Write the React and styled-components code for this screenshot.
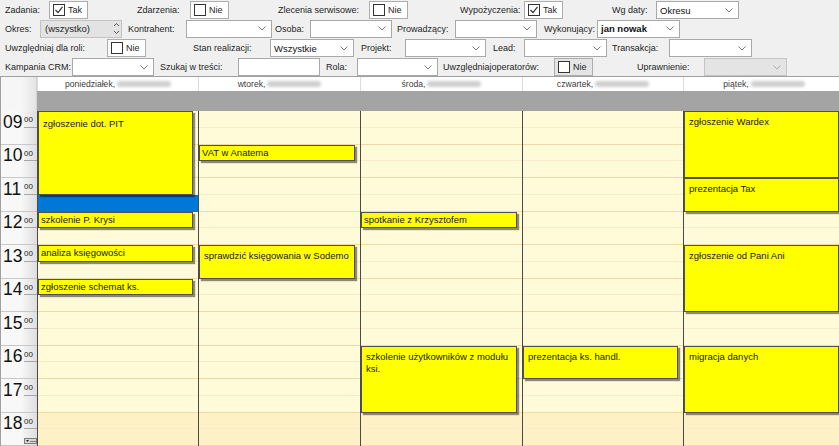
import React from "react";
import styled, { createGlobalStyle } from "styled-components";

const GlobalStyle = createGlobalStyle`
  html, body { margin: 0; padding: 0; background: #f0f0f0; overflow: hidden; }
  body { font-family: "Liberation Sans", Arial, sans-serif; color: #000; }
  * { box-sizing: border-box; }
`;

const HOUR = 33.5;
const SLOT = HOUR / 2;

//Filter definitions: label x, control x, control width
const filterRows = [
  [
    { label: "Zadania:", lx: 5, cx: 49, w: 39, type: "check", value: "Tak", checked: true },
    { label: "Zdarzenia:", lx: 137, cx: 190, w: 39, type: "check", value: "Nie" },
    { label: "Zlecenia serwisowe:", lx: 278, cx: 369, w: 39, type: "check", value: "Nie" },
    { label: "Wypożyczenia:", lx: 460, cx: 524, w: 39, type: "check", value: "Tak", checked: true },
    { label: "Wg daty:", lx: 612, cx: 656, w: 83, type: "combo", value: "Okresu" },
  ],
  [
    { label: "Okres:", lx: 5, cx: 40, w: 82, type: "spin", value: "(wszystko)" },
    { label: "Kontrahent:", lx: 128, cx: 186, w: 86, type: "combo" },
    { label: "Osoba:", lx: 275, cx: 310, w: 82, type: "combo" },
    { label: "Prowadzący:", lx: 397, cx: 455, w: 82, type: "combo" },
    { label: "Wykonujący:", lx: 544, cx: 597, w: 83, type: "combo", value: "jan nowak", bold: true },
  ],
  [
    { label: "Uwzględniaj dla roli:", lx: 5, cx: 107, w: 39, type: "check", value: "Nie" },
    { label: "Stan realizacji:", lx: 193, cx: 270, w: 84, type: "combo", value: "Wszystkie" },
    { label: "Projekt:", lx: 361, cx: 405, w: 81, type: "combo" },
    { label: "Lead:", lx: 493, cx: 524, w: 83, type: "combo" },
    { label: "Transakcja:", lx: 612, cx: 669, w: 83, type: "combo" },
  ],
  [
    { label: "Kampania CRM:", lx: 5, cx: 72, w: 82, type: "combo" },
    { label: "Szukaj w treści:", lx: 160, cx: 238, w: 82, type: "text" },
    { label: "Rola:", lx: 326, cx: 357, w: 81, type: "combo" },
    { label: "Uwzględniajoperatorów:", lx: 443, cx: 554, w: 39, type: "check", value: "Nie", grey: true },
    { label: "Uprawnienie:", lx: 637, cx: 704, w: 83, type: "combo", disabled: true },
  ],
];

const rowHeights = [19, 20, 19, 18];

const days = [
  {
    name: "poniedziałek,",
    selected: 5,
    events: [
      { text: "zgłoszenie dot. PIT", from: 9, to: 11.5, pt: 6 },
      { text: "szkolenie P. Krysi", from: 12, to: 12.5 },
      { text: "analiza księgowości", from: 13, to: 13.5 },
      { text: "zgłoszenie schemat ks.", from: 14, to: 14.5 },
    ],
  },
  {
    name: "wtorek,",
    events: [
      { text: "VAT w Anatema", from: 10, to: 10.5 },
      { text: "sprawdzić księgowania w Sodemo", from: 13, to: 14 },
    ],
  },
  {
    name: "środa,",
    events: [
      { text: "spotkanie z Krzysztofem", from: 12, to: 12.5 },
      { text: "szkolenie użytkowników z modułu ksi.", from: 16, to: 18 },
    ],
  },
  {
    name: "czwartek,",
    events: [{ text: "prezentacja ks. handl.", from: 16, to: 17 }],
  },
  {
    name: "piątek,",
    events: [
      { text: "zgłoszenie Wardex", from: 9, to: 11 },
      { text: "prezentacja Tax", from: 11, to: 12 },
      { text: "zgłoszenie od Pani Ani", from: 13, to: 15 },
      { text: "migracja danych", from: 16, to: 18 },
    ],
  },
];

const hours = [9, 10, 11, 12, 13, 14, 15, 16, 17, 18];

const Chevron = () => (
  <svg width="8" height="5" viewBox="0 0 8 5">
    <polyline points="0.5,0.5 4,4 7.5,0.5" fill="none" stroke="#7a7a7a" strokeWidth="1" />
  </svg>
);

const CheckMark = () => (
  <svg width="10" height="10" viewBox="0 0 10 10">
    <polyline points="1.5,5 4,7.5 8.5,1.8" fill="none" stroke="#333" strokeWidth="1.2" />
  </svg>
);

const SpinArrows = () => (
  <svg width="7" height="13" viewBox="0 0 7 13">
    <polyline points="1,4 3.5,1.5 6,4" fill="none" stroke="#555" strokeWidth="1" />
    <polyline points="1,9 3.5,11.5 6,9" fill="none" stroke="#555" strokeWidth="1" />
  </svg>
);

const MoreIcon = () => (
  <svg width="13" height="6" viewBox="0 0 13 6">
    <rect x="0.5" y="0.5" width="12" height="5" fill="#d8d8d8" stroke="#7c7c7c" />
    <polygon points="2,2 5,2 3.5,4" fill="#222" />
    <rect x="6.5" y="3" width="1" height="1" fill="#222" />
    <rect x="8.5" y="3" width="1" height="1" fill="#222" />
    <rect x="10.5" y="3" width="1" height="1" fill="#222" />
  </svg>
);

const Field = ({ f, ml }) => {
  let control;
  if (f.type === "check") {
    control = (
      <CheckField $w={f.w} $grey={f.grey}>
        <Box>{f.checked && <CheckMark />}</Box>
        {f.value}
      </CheckField>
    );
  } else if (f.type === "spin") {
    control = (
      <Spin $w={f.w}>
        <span>{f.value}</span>
        <SpinArrows />
      </Spin>
    );
  } else if (f.type === "text") {
    control = <TextBox $w={f.w} />;
  } else {
    control = (
      <Combo $w={f.w} $bold={f.bold} $disabled={f.disabled}>
        <span>{f.value}</span>
        <Chevron />
      </Combo>
    );
  }
  return (
    <FieldWrap $ml={ml}>
      <Label $w={f.cx - f.lx}>{f.label}</Label>
      {control}
    </FieldWrap>
  );
};

const App = () => {
  return (
    <Page>
      <GlobalStyle />
      <Filters>
        {filterRows.map((row, ri) => {
          let end = 0;
          return (
            <FilterRow key={ri} $h={rowHeights[ri]}>
              {row.map((f, i) => {
                const ml = f.lx - end;
                end = f.cx + f.w;
                return <Field key={i} f={f} ml={ml} />;
              })}
            </FilterRow>
          );
        })}
      </Filters>
      <Calendar>
        <Corner />
        {days.map((d, i) => (
          <DayHeader key={i} $col={i + 2}>
            {d.name}
            <Blur />
          </DayHeader>
        ))}
        <Band />
        <TimeColumn>
          {hours.map((h, i) => (
            <HourCell key={h}>
              <HourTop>
                <HourNum>{String(h).padStart(2, "0")}</HourNum>
                <Minutes>00</Minutes>
              </HourTop>
              <HourBottom>{i === hours.length - 1 && <MoreIcon />}</HourBottom>
            </HourCell>
          ))}
        </TimeColumn>
        {days.map((d, di) => (
          <DayColumn key={di} $col={di + 2}>
            {Array.from({ length: 20 }).map((_, si) => (
              <Slot
                key={si}
                $hourEnd={si % 2 === 1}
                $late={si >= 18}
                $selected={d.selected === si}
              />
            ))}
            {d.events.map((e, ei) => {
              const short = e.to - e.from <= 0.5;
              return (
                <Event
                  key={ei}
                  $short={short}
                  $pt={e.pt}
                  style={{ top: (e.from - 9) * HOUR, height: (e.to - e.from) * HOUR }}
                >
                  {e.text}
                </Event>
              );
            })}
          </DayColumn>
        ))}
      </Calendar>
    </Page>
  );
};

const Page = styled.div`
  width: 839px;
  height: 446px;
  overflow: hidden;
  background: #f0f0f0;
`;

const Filters = styled.div`
  display: flex;
  flex-direction: column;
  padding-top: 1px;
  height: 76px;
  font-size: 9px;
  color: #1e1e1e;
`;

const FilterRow = styled.div`
  display: flex;
  align-items: flex-start;
  height: ${(p) => p.$h}px;
`;

const FieldWrap = styled.div`
  display: flex;
  margin-left: ${(p) => p.$ml}px;
`;

const Label = styled.span`
  width: ${(p) => p.$w}px;
  line-height: 18px;
  white-space: nowrap;
`;

const CheckField = styled.div`
  width: ${(p) => p.$w}px;
  height: 18px;
  border: 1px solid #adadad;
  background: ${(p) => (p.$grey ? "#e5e5e5" : "#fff")};
  display: flex;
  align-items: center;
  gap: 3px;
  padding-left: 3px;
`;

const Box = styled.span`
  width: 12px;
  height: 12px;
  border: 1px solid #333;
  background: #fff;
  display: inline-flex;
  align-items: center;
  justify-content: center;
`;

const Combo = styled.div`
  width: ${(p) => p.$w}px;
  height: 18px;
  border: 1px solid ${(p) => (p.$disabled ? "#c4c4c4" : "#a9a9a9")};
  background: ${(p) => (p.$disabled ? "#e4e4e4" : "#fff")};
  display: flex;
  align-items: center;
  justify-content: space-between;
  padding: 0 5px 0 3px;
  font-size: 9.5px;
  font-weight: ${(p) => (p.$bold ? "bold" : "normal")};
  color: #111;
  svg {
    opacity: ${(p) => (p.$disabled ? 0.5 : 1)};
  }
`;

const Spin = styled.div`
  width: ${(p) => p.$w}px;
  height: 18px;
  border: 1px solid #c2c2c2;
  background: #e3e3e3;
  display: flex;
  align-items: center;
  justify-content: space-between;
  padding: 0 1px 0 4px;
  font-size: 9.5px;
`;

const TextBox = styled.div`
  width: ${(p) => p.$w}px;
  height: 18px;
  border: 1px solid #a9a9a9;
  background: #fff;
`;

const Calendar = styled.div`
  display: grid;
  grid-template-columns: 36px 161px 162px 162px 161px 161px;
  grid-template-rows: 14px 20px ${HOUR * 10}px;
  border-top: 1px solid #a0a0a0;
  border-left: 1px solid #a0a0a0;
`;

const Corner = styled.div`
  grid-column: 1;
  grid-row: 1 / 3;
  background: linear-gradient(to right, #f6f6f6 60%, #e4e4e4);
  border-right: 1px solid #d4d4d4;
`;

const DayHeader = styled.div`
  grid-column: ${(p) => p.$col};
  grid-row: 1;
  background: #fff;
  border-left: 1px solid #dcdcdc;
  font-size: 8.6px;
  line-height: 13px;
  color: #3c3c3c;
  display: flex;
  justify-content: center;
  align-items: center;
  white-space: nowrap;
`;

const Blur = styled.span`
  display: inline-block;
  width: 54px;
  height: 6px;
  margin-left: 2px;
  border-radius: 3px;
  background: #cfcfcf;
  filter: blur(1.5px);
`;

const Band = styled.div`
  grid-column: 2 / -1;
  grid-row: 2;
  background: #a4a4a4;
`;

const TimeColumn = styled.div`
  grid-column: 1;
  grid-row: 3;
  display: flex;
  flex-direction: column;
  background: linear-gradient(to right, #f8f8f8 55%, #dedede);
`;

const HourCell = styled.div`
  height: ${HOUR}px;
  display: flex;
  flex-direction: column;
  border-bottom: 1px solid #c8c8c8;
`;

const HourTop = styled.div`
  height: ${SLOT}px;
  display: flex;
  justify-content: space-between;
  align-items: flex-end;
  padding-left: 2px;
`;

const HourNum = styled.span`
  font-size: 17.5px;
  line-height: 13px;
  color: #111;
  margin-bottom: -1px;
`;

const Minutes = styled.span`
  align-self: stretch;
  width: 13px;
  font-size: 8px;
  line-height: 8px;
  padding: 5px 0 0 0;
  border-bottom: 1px solid #a6a6a6;
  color: #222;
`;

const HourBottom = styled.div`
  flex: 1;
  display: flex;
  justify-content: flex-end;
  align-items: flex-end;
  padding-bottom: 1px;
`;

const DayColumn = styled.div`
  grid-column: ${(p) => p.$col};
  grid-row: 3;
  position: relative;
  display: flex;
  flex-direction: column;
  border-left: 1px solid #4a4a4a;
`;

const Slot = styled.div`
  height: ${SLOT}px;
  flex-shrink: 0;
  background: ${(p) => (p.$selected ? "#0078d7" : p.$late ? "#fff1c6" : "#fffbd8")};
  border-bottom: 1px solid ${(p) => (p.$selected ? "#0078d7" : p.$hourEnd ? "#f3d9a9" : "#faebcb")};
`;

const Event = styled.div`
  position: absolute;
  left: 0;
  right: 5px;
  background: #ffff00;
  border: 1px solid #505050;
  box-shadow: 2px 2px 1px rgba(0, 0, 0, 0.45);
  font-size: 9.5px;
  line-height: 12px;
  color: #1a1a1a;
  padding: ${(p) => (p.$short ? "1px 2px" : `${p.$pt || 4}px 4px`)};
  overflow: hidden;
`;

export default App;
